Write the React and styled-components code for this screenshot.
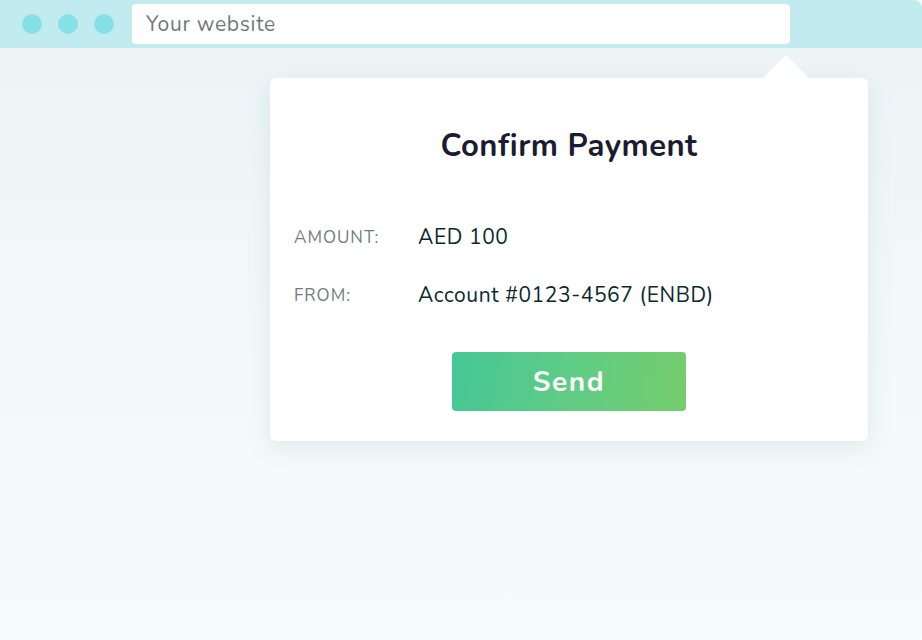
import React from "react";
import styled, { createGlobalStyle } from "styled-components";

const GlobalStyle = createGlobalStyle`
  html, body {
    margin: 0;
    padding: 0;
    background: #ffffff;
  }
  body {
    font-family: "Nunito", Lato, "Noto Sans", sans-serif;
  }
`;

const Frame = styled.div`
  width: 922px;
  height: 640px;
  display: flex;
  flex-direction: column;
  border-radius: 0 8px 4px 4px;
  overflow: hidden;
`;

const TopBar = styled.div`
  height: 48px;
  flex-shrink: 0;
  display: flex;
  align-items: center;
  padding-left: 22px;
  gap: 16px;
  background: #c1ebef;
`;

const Dot = styled.span`
  width: 20px;
  height: 20px;
  border-radius: 50%;
  background: #86e1e5;
`;

const UrlBar = styled.div`
  margin-left: 2px;
  width: 644px;
  height: 40px;
  padding-left: 14px;
  display: flex;
  align-items: center;
  background: #ffffff;
  border-radius: 4px;
  font-size: 21px;
  color: #6c7a7a;
  letter-spacing: 0.7px;
`;

const Body = styled.div`
  flex: 1;
  padding: 30px 0 0 270px;
  background: linear-gradient(180deg, #ecf4f6 0%, #f3f9fa 50%, #f6fcfd 100%);
`;

const Card = styled.div`
  position: relative;
  width: 598px;
  height: 363px;
  box-sizing: border-box;
  padding: 50px 24px 30px;
  display: flex;
  flex-direction: column;
  background: #ffffff;
  border-radius: 6px;
  box-shadow: 0 6px 24px rgba(90, 130, 140, 0.14);
`;

const Pointer = styled.span`
  position: absolute;
  top: -23px;
  left: ${(p) => p.$left}px;
  width: 0;
  height: 0;
  border-left: 23px solid transparent;
  border-right: 23px solid transparent;
  border-bottom: 23px solid #ffffff;
`;

const Title = styled.h2`
  margin: 0;
  font-size: 31px;
  line-height: 36px;
  font-weight: 700;
  letter-spacing: 0.5px;
  text-align: center;
  color: #1a1c30;
`;

const Rows = styled.div`
  margin-top: 58px;
  display: flex;
  flex-direction: column;
  gap: 28px;
`;

const Row = styled.div`
  display: flex;
  align-items: center;
  height: 30px;
`;

const Label = styled.span`
  width: 124px;
  font-size: 17px;
  letter-spacing: 1px;
  color: #6f7c7c;
`;

const Value = styled.span`
  font-size: 21px;
  letter-spacing: 0.6px;
  color: #0c2930;
`;

const SendButton = styled.button`
  margin: 42px auto 0;
  width: 234px;
  height: 59px;
  border: none;
  border-radius: 4px;
  background: linear-gradient(100deg, #45c797 0%, #60cc85 50%, #75cd6c 100%);
  color: #ffffff;
  font-family: inherit;
  font-size: 28px;
  font-weight: 700;
  letter-spacing: 1.6px;
  cursor: pointer;
`;

const details = [
  { label: "AMOUNT:", value: "AED 100" },
  { label: "FROM:", value: "Account #0123-4567 (ENBD)" },
];

export default function App() {
  return (
    <>
      <GlobalStyle />
      <Frame>
        <TopBar>
          <Dot />
          <Dot />
          <Dot />
          <UrlBar>Your website</UrlBar>
        </TopBar>
        <Body>
          <Card>
            <Pointer $left={493} />
            <Title>Confirm Payment</Title>
            <Rows>
              {details.map((d) => (
                <Row key={d.label}>
                  <Label>{d.label}</Label>
                  <Value>{d.value}</Value>
                </Row>
              ))}
            </Rows>
            <SendButton>Send</SendButton>
          </Card>
        </Body>
      </Frame>
    </>
  );
}
